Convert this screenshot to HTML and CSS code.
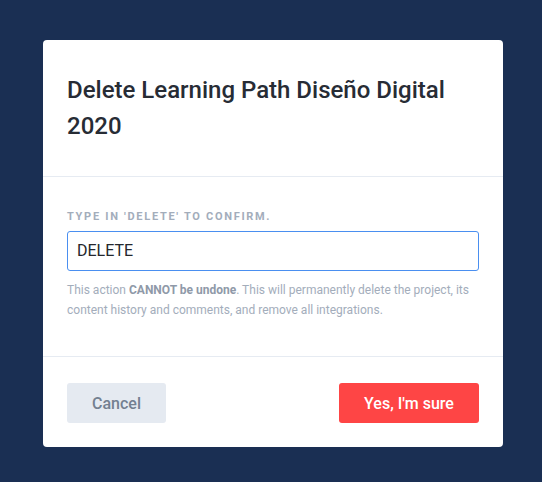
FILE: index.html
```html
<!DOCTYPE html>
<html>
<head>
<meta charset="utf-8">
<link rel="stylesheet" href="styles.css">
</head>
<body>
<div class="modal">
  <div class="modal-header">
    <h1 class="title">Delete Learning Path Diseño Digital 2020</h1>
  </div>
  <div class="modal-body">
    <label class="label">Type in 'DELETE' to confirm.</label>
    <div class="input">DELETE</div>
    <p class="help">This action <strong>CANNOT be undone</strong>. This will permanently delete the project, its content history and comments, and remove all integrations.</p>
  </div>
  <div class="modal-footer">
    <button class="btn btn-cancel">Cancel</button>
    <button class="btn btn-danger">Yes, I'm sure</button>
  </div>
</div>
</body>
</html>
```
FILE: styles.css
```css
html, body {
  margin: 0;
  padding: 0;
}
body {
  background: #1a2f53;
  font-family: Roboto, "Noto Sans", sans-serif;
  width: 542px;
  height: 482px;
  padding-top: 40px;
  padding-left: 43px;
  box-sizing: border-box;
}
.modal {
  width: 460px;
  background: #ffffff;
  border-radius: 4px;
  overflow: hidden;
}
.modal-header {
  padding: 32px 24px;
  border-bottom: 1px solid #e6ebf2;
}
.title {
  margin: 0;
  font-size: 24px;
  line-height: 36px;
  font-weight: 500;
  color: #272c35;
}
.modal-body {
  padding: 32px 24px 36px;
  border-bottom: 1px solid #e6ebf2;
}
.label {
  display: block;
  font-size: 11px;
  line-height: 16px;
  font-weight: 700;
  letter-spacing: 1.7px;
  text-transform: uppercase;
  color: #a3adbb;
}
.input {
  margin-top: 6px;
  height: 40px;
  box-sizing: border-box;
  border: 1px solid #4a8ff0;
  border-radius: 3px;
  padding: 0 9px;
  font-size: 16px;
  line-height: 38px;
  color: #24272d;
}
.help {
  margin: 9px 0 0;
  font-size: 12px;
  line-height: 20px;
  color: #a3adbb;
}
.help strong {
  color: #8f99a8;
  font-weight: 700;
}
.modal-footer {
  padding: 26px 24px 24px;
  display: flex;
  justify-content: space-between;
}
.btn {
  height: 40px;
  border: none;
  border-radius: 3px;
  font-family: Roboto, "Noto Sans", sans-serif;
  font-size: 16px;
  font-weight: 500;
  cursor: pointer;
}
.btn-cancel {
  width: 99px;
  background: #e5eaf1;
  color: #738090;
}
.btn-danger {
  width: 140px;
  background: #fe4545;
  color: #ffffff;
}
```
